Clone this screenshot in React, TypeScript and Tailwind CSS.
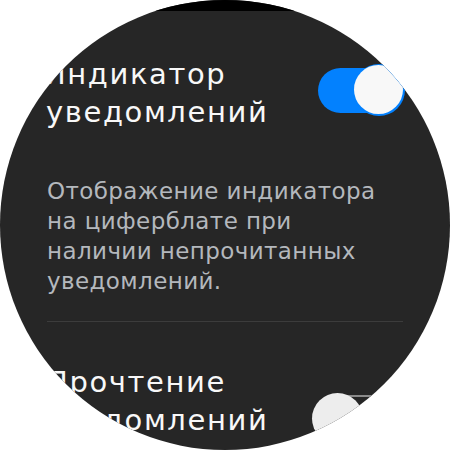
import React from "react";

function ToggleOn() {
  return (
    <div className="relative w-[87px] h-[52px] shrink-0">
      <div className="absolute left-0 right-[3px] top-[4px] bottom-[3px] rounded-full bg-[#0381fe]" />
      <div className="absolute right-0 top-0 w-[52px] h-[52px] rounded-full bg-[#0381fe]" />
      <div className="absolute right-[2px] top-[1px] w-[49px] h-[49px] rounded-full bg-[#f8f8f8]" />
    </div>
  );
}

function ToggleOff() {
  return (
    <div className="relative w-[87px] h-[52px] shrink-0">
      <div className="absolute left-[2px] right-0 top-[2px] bottom-[3px] rounded-full border-2 border-[#8a8a8a]" />
      <div className="absolute left-0 top-0 w-[51px] h-[51px] rounded-full bg-[#ededed]" />
    </div>
  );
}

export default function App() {
  return (
    <div className="w-[450px] h-[450px] bg-white">
      <div
        className="w-[450px] h-[450px] rounded-full overflow-hidden bg-[#262626] flex flex-col"
        style={{ fontFamily: "'DejaVu Sans', Roboto, sans-serif" }}
      >
        <div className="h-[11px] bg-black shrink-0" />
        <div className="flex items-start justify-between pl-[44px] pr-[45px] pt-[44px]">
          <div className="text-[29px] leading-[38px] text-[#f8f8f8] tracking-[1.6px] whitespace-nowrap">
            Индикатор
            <br />
            <span className="ml-[2px]">уведомлений</span>
          </div>
          <div className="mt-[9px]">
            <ToggleOn />
          </div>
        </div>
        <div className="pl-[47px] pr-[30px] pt-[45px] text-[23px] leading-[30px] text-[#b4b8bd] tracking-[0.4px] whitespace-nowrap">
          Отображение индикатора
          <br />
          на циферблате при
          <br />
          наличии непрочитанных
          <br />
          уведомлений.
        </div>
        <div className="mx-[47px] mt-[25px] h-px bg-[#3c3c3c] shrink-0" />
        <div className="flex items-start justify-between pl-[46px] pr-[51px] pt-[41px]">
          <div className="text-[29px] leading-[38px] text-[#f8f8f8] tracking-[1.6px] whitespace-nowrap">
            Прочтение
            <br />
            уведомлений
          </div>
          <div className="mt-[30px]">
            <ToggleOff />
          </div>
        </div>
      </div>
    </div>
  );
}
